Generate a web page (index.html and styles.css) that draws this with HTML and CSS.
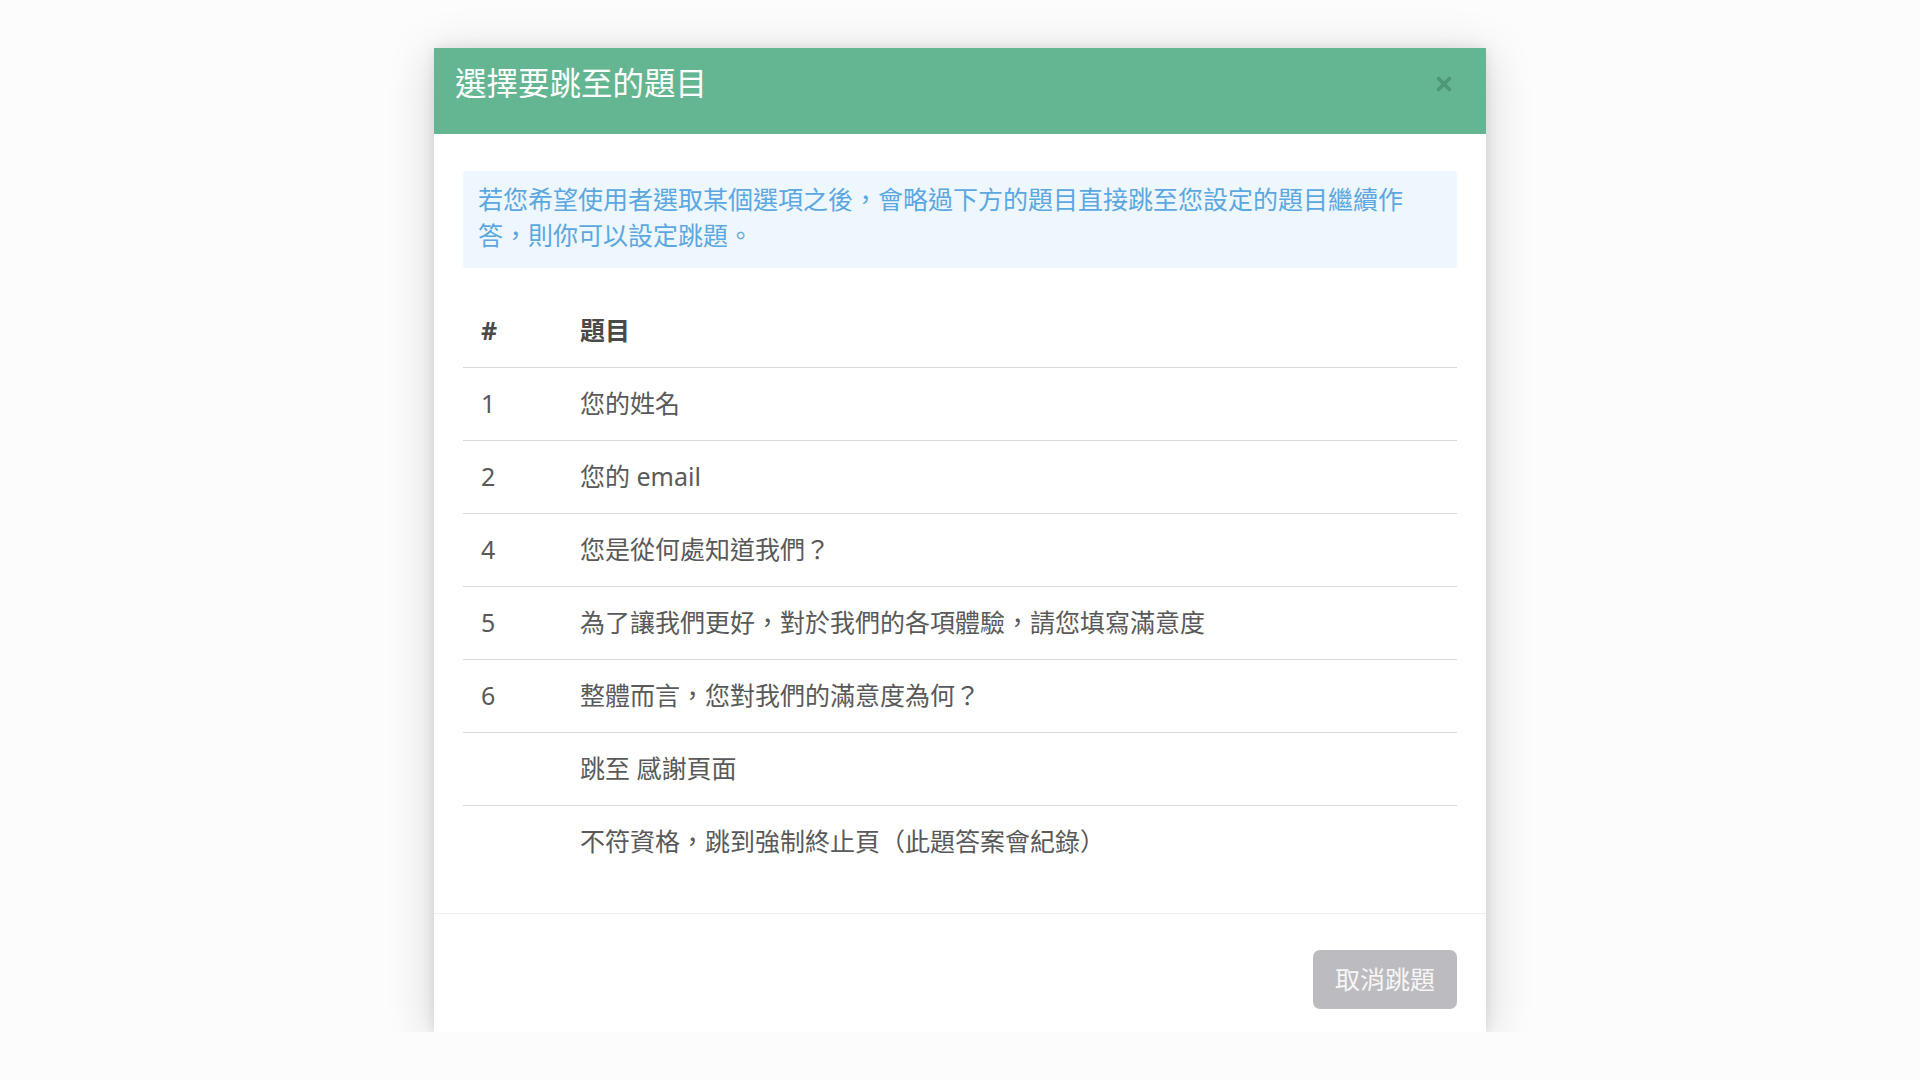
FILE: index.html
```html
<!DOCTYPE html>
<html lang="zh-Hant">
<head>
<meta charset="utf-8">
<title>選擇要跳至的題目</title>
<link rel="stylesheet" href="styles.css">
</head>
<body>
<div class="modal">
  <div class="modal-header">
    <h2 class="modal-title">選擇要跳至的題目</h2>
    <button class="close" aria-label="close">
      <svg width="18" height="18" viewBox="0 0 18 18"><path d="M2.5 2.5 L15.5 15.5 M15.5 2.5 L2.5 15.5" stroke="#4f9877" stroke-width="3.6" fill="none"/></svg>
    </button>
  </div>
  <div class="modal-body">
    <div class="alert">若您希望使用者選取某個選項之後，會略過下方的題目直接跳至您設定的題目繼續作答，則你可以設定跳題。</div>
    <div class="qtable">
      <div class="qrow head"><div class="num">#</div><div class="q">題目</div></div>
      <div class="qrow"><div class="num">1</div><div class="q">您的姓名</div></div>
      <div class="qrow"><div class="num">2</div><div class="q">您的 email</div></div>
      <div class="qrow"><div class="num">4</div><div class="q">您是從何處知道我們？</div></div>
      <div class="qrow"><div class="num">5</div><div class="q">為了讓我們更好，對於我們的各項體驗，請您填寫滿意度</div></div>
      <div class="qrow"><div class="num">6</div><div class="q">整體而言，您對我們的滿意度為何？</div></div>
      <div class="qrow"><div class="num"></div><div class="q">跳至 感謝頁面</div></div>
      <div class="qrow"><div class="num"></div><div class="q">不符資格，跳到強制終止頁（此題答案會紀錄）</div></div>
    </div>
  </div>
  <div class="modal-footer">
    <button class="btn">取消跳題</button>
  </div>
</div>
</body>
</html>
```
FILE: styles.css
```css
html, body {
  margin: 0;
  padding: 0;
  background: #fdfcfd;
}
body {
  font-family: "Noto Sans", "Noto Sans CJK TC", sans-serif;
  color: #595959;
  padding-top: 48px;
}
.modal {
  width: 1052px;
  margin: 0 auto;
  background: #ffffff;
  box-shadow: 0 0 12px rgba(0, 0, 0, 0.09), 0 8px 44px rgba(0, 0, 0, 0.17);
}
.modal-header {
  height: 86px;
  box-sizing: border-box;
  background: #64b693;
  display: flex;
  justify-content: space-between;
  align-items: flex-start;
  padding: 11px 33px 0 21px;
}
.modal-title {
  margin: 0;
  font-family: "Noto Sans CJK TC", sans-serif;
  font-weight: 400;
  font-size: 31.5px;
  line-height: 44px;
  color: #ffffff;
}
.close {
  margin-top: 16px;
  padding: 0;
  border: none;
  background: none;
  width: 18px;
  height: 18px;
  display: block;
}
.close svg {
  display: block;
}
.modal-body {
  padding: 37px 29px 35px;
}
.alert {
  background: #eef6fe;
  color: #5ba8e1;
  font-family: "Noto Sans CJK TC", sans-serif;
  font-size: 25px;
  line-height: 36px;
  padding: 9px 15px 16px;
  border-radius: 4px;
  margin-bottom: 27px;
}
.qtable {
  font-size: 25px;
}
.qrow {
  display: grid;
  grid-template-columns: 99px 1fr;
  align-items: center;
  height: 73px;
  box-sizing: border-box;
  border-bottom: 1px solid #d9d9db;
}
.qrow:last-child {
  border-bottom: none;
  height: 72px;
}
.qrow > div {
  padding: 0 18px 2px;
  line-height: 36px;
}
.qrow.head {
  color: #4a4a4a;
  font-weight: 700;
}
.modal-footer {
  border-top: 1px solid #eeedf0;
  padding: 36px 29px 23px;
  display: flex;
  justify-content: flex-end;
}
.btn {
  height: 59px;
  padding: 0 22px 2px;
  border: none;
  border-radius: 7px;
  background: #bcbbbf;
  color: #f6f6f6;
  font-family: "Noto Sans CJK TC", sans-serif;
  font-size: 25px;
  line-height: 57px;
}
```
